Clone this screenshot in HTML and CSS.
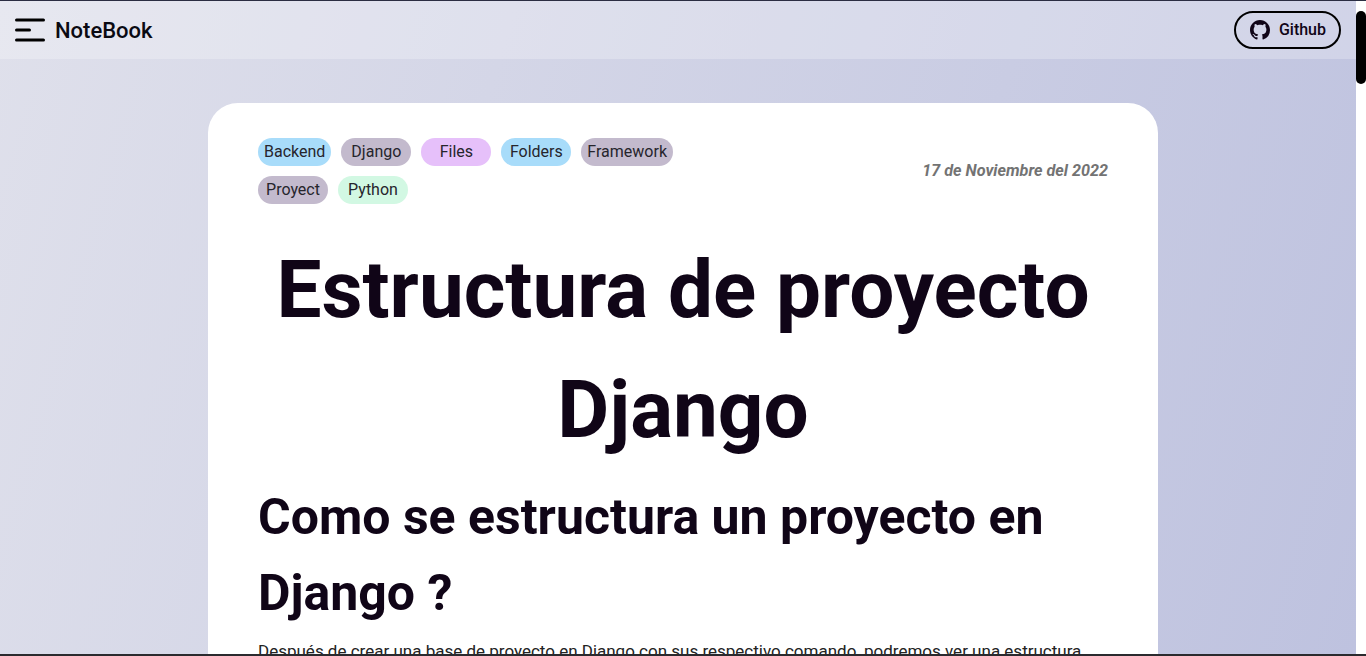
FILE: index.html
```html
<!DOCTYPE html>
<html lang="es">
<head>
  <meta charset="UTF-8" />
  <meta name="viewport" content="width=device-width, initial-scale=1" />
  <title>NoteBook</title>
  <link rel="stylesheet" href="styles.css">
</head>
<body>
  <div class="window">
    <div class="page">
      <header class="navbar">
        <div class="brand">
          <svg class="menu-icon" width="30" height="24" viewBox="0 0 30 24" aria-hidden="true">
            <path d="M1.5 2H28.5M1.5 12H14.5M1.5 22H28.5" fill="none" stroke="#000" stroke-width="3" stroke-linecap="round"/>
          </svg>
          <span class="brand-name">NoteBook</span>
        </div>
        <a class="github-btn" href="#">
          <svg width="20" height="20" viewBox="0 0 16 16" aria-hidden="true">
            <path fill="#100517" d="M8 0C3.58 0 0 3.58 0 8c0 3.54 2.29 6.53 5.47 7.59.4.07.55-.17.55-.38 0-.19-.01-.82-.01-1.49-2.01.37-2.53-.49-2.69-.94-.09-.23-.48-.94-.82-1.13-.28-.15-.68-.52-.01-.53.63-.01 1.08.58 1.23.82.72 1.21 1.87.87 2.33.66.07-.52.28-.87.51-1.07-1.78-.2-3.64-.89-3.64-3.95 0-.87.31-1.59.82-2.15-.08-.2-.36-1.02.08-2.12 0 0 .67-.21 2.2.82.64-.18 1.32-.27 2-.27s1.36.09 2 .27c1.53-1.04 2.2-.82 2.2-.82.44 1.1.16 1.92.08 2.12.51.56.82 1.27.82 2.15 0 3.07-1.87 3.75-3.65 3.95.29.25.54.73.54 1.48 0 1.07-.01 1.93-.01 2.2 0 .21.15.46.55.38A8.01 8.01 0 0 0 16 8c0-4.42-3.58-8-8-8z"/>
          </svg>
          <span class="github-label">Github</span>
        </a>
      </header>

      <main class="note">
        <div class="note-meta">
          <ul class="tags">
            <li class="tag tag-blue">Backend</li>
            <li class="tag tag-grey">Django</li>
            <li class="tag tag-purple">Files</li>
            <li class="tag tag-blue">Folders</li>
            <li class="tag tag-grey">Framework</li>
            <li class="tag tag-grey">Proyect</li>
            <li class="tag tag-green">Python</li>
          </ul>
          <p class="note-date">17 de Noviembre del 2022</p>
        </div>
        <h1>Estructura de proyecto Django</h1>
        <h2>Como se estructura un proyecto en Django ?</h2>
        <p class="note-text">Después de crear una base de proyecto en Django con sus respectivo comando, podremos ver una estructura</p>
      </main>
    </div>
    <div class="scrollbar"><div class="scrollbar-thumb"></div></div>
  </div>
</body>
</html>
```

FILE: styles.css
```css
* {
  box-sizing: border-box;
}
html,
body {
  margin: 0;
  height: 100%;
  overflow: hidden;
}
body {
  font-family: Roboto, "Liberation Sans", sans-serif;
  color: #100517;
  background: #fff;
}
.window {
  display: flex;
  height: 656px;
  border-top: 1px solid #2b2d42;
  border-bottom: 2px solid #2a2a2e;
}
.page {
  flex: 1;
  min-width: 0;
  overflow: hidden;
  background: linear-gradient(106deg, #dfe0eb 0%, #bec2df 100%);
}
.navbar {
  display: flex;
  align-items: center;
  justify-content: space-between;
  height: 58px;
  padding: 0 15px;
  background: rgba(255, 255, 255, 0.25);
}
.brand {
  display: flex;
  align-items: center;
  gap: 10px;
}
.menu-icon {
  display: block;
}
.brand-name {
  font-size: 22px;
  font-weight: 500;
  color: #0a0a12;
}
.github-btn {
  display: flex;
  align-items: center;
  gap: 9px;
  height: 38px;
  padding: 0 13px 0 14px;
  border: 2px solid #000;
  border-radius: 19px;
  font-size: 16px;
  font-weight: 500;
  color: #100517;
  text-decoration: none;
}
.github-label {
  margin-bottom: 2px;
}
.note {
  width: 950px;
  height: 600px;
  margin: 44px 0 0 208px;
  padding: 35px 50px 0;
  background: #fff;
  border-radius: 30px 30px 0 0;
}
.note-meta {
  display: flex;
  align-items: center;
  justify-content: space-between;
}
.tags {
  display: flex;
  flex-wrap: wrap;
  gap: 10px;
  width: 440px;
  margin: 0;
  padding: 0;
  list-style: none;
}
.tag {
  min-width: 70px;
  height: 28px;
  padding: 0 6px;
  border-radius: 14px;
  font-size: 16px;
  line-height: 27px;
  text-align: center;
  color: #26252c;
}
.tag-blue {
  background: #a8dcfa;
}
.tag-grey {
  background: #c3bacd;
}
.tag-purple {
  background: #e6c0fa;
}
.tag-green {
  background: #d2f8e3;
}
.note-date {
  margin: 0 0 2px;
  font-size: 16.2px;
  font-weight: 700;
  font-style: italic;
  color: #737373;
}
h1 {
  margin: 26px 0 0;
  font-size: 80px;
  line-height: 120px;
  font-weight: 700;
  text-align: center;
}
h2 {
  margin: 9px 0 0;
  font-size: 50px;
  line-height: 76px;
  font-weight: 700;
}
.note-text {
  margin: 8px 0 0;
  font-size: 17px;
  line-height: 24px;
  color: #222;
  white-space: nowrap;
}
.scrollbar {
  flex: none;
  width: 10px;
  padding-top: 10px;
  background: #fff;
}
.scrollbar-thumb {
  height: 73px;
  background: #000;
  border-radius: 5px;
}
```
